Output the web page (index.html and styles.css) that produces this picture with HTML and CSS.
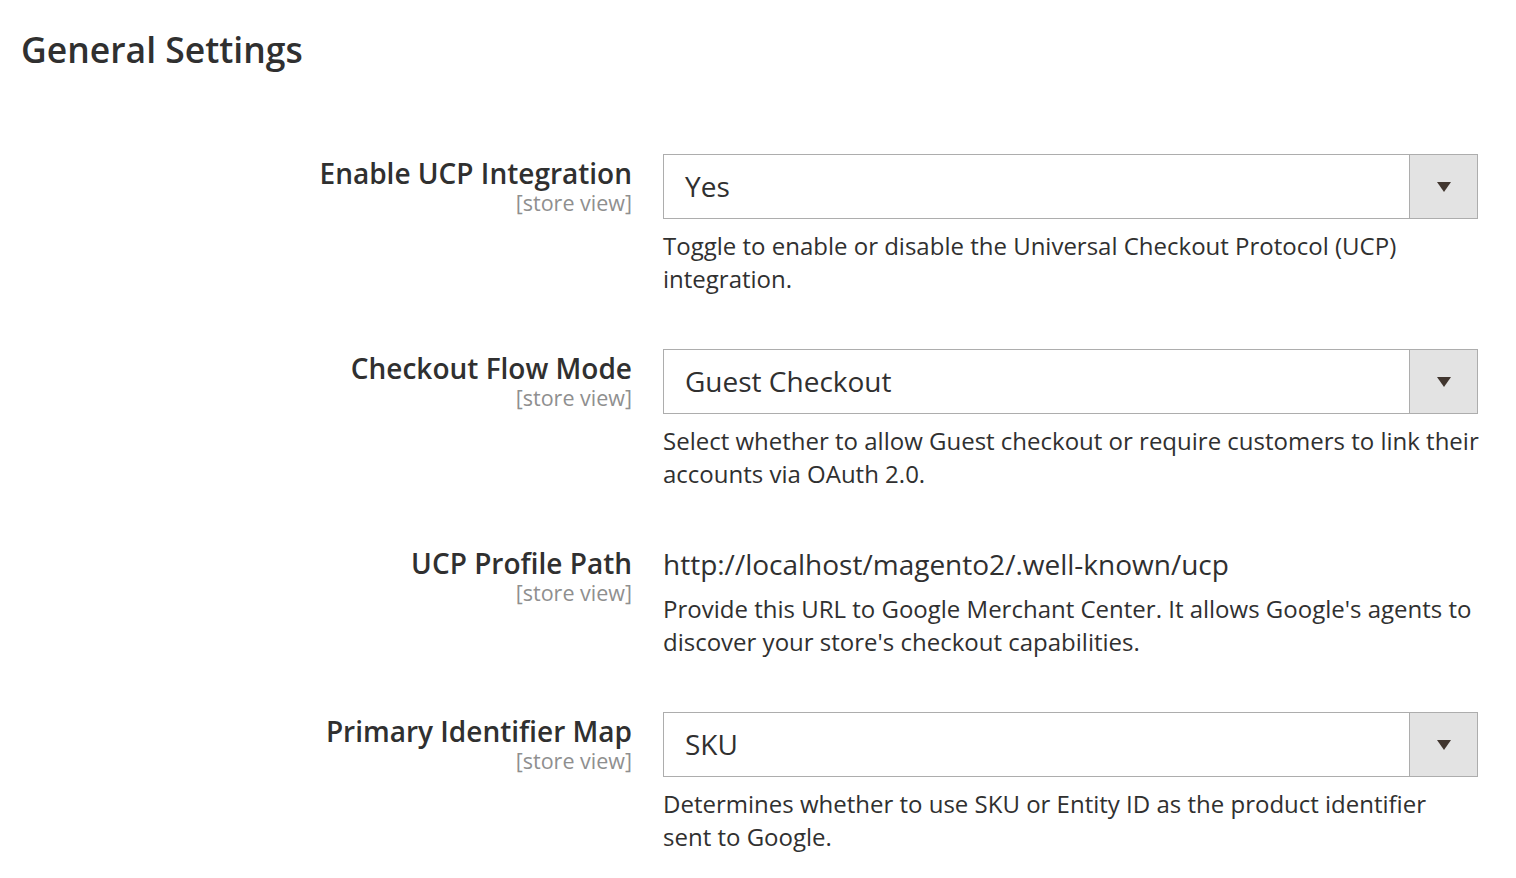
FILE: index.html
```html
<!DOCTYPE html>
<html lang="en">
<head>
<meta charset="utf-8">
<title>General Settings</title>
<link rel="stylesheet" href="styles.css">
</head>
<body>
<div class="page">
  <h1 class="section-title">General Settings</h1>
  <div class="config">
    <div class="row">
      <div class="label-col">
        <div class="label">Enable UCP Integration</div>
        <div class="scope">[store view]</div>
      </div>
      <div class="value-col">
        <div class="select"><span class="select-text">Yes</span><span class="select-btn"><span class="arrow"></span></span></div>
        <p class="note">Toggle to enable or disable the Universal Checkout Protocol (UCP) integration.</p>
      </div>
    </div>
    <div class="row">
      <div class="label-col">
        <div class="label">Checkout Flow Mode</div>
        <div class="scope">[store view]</div>
      </div>
      <div class="value-col">
        <div class="select"><span class="select-text">Guest Checkout</span><span class="select-btn"><span class="arrow"></span></span></div>
        <p class="note">Select whether to allow Guest checkout or require customers to link their accounts via OAuth 2.0.</p>
      </div>
    </div>
    <div class="row">
      <div class="label-col">
        <div class="label">UCP Profile Path</div>
        <div class="scope">[store view]</div>
      </div>
      <div class="value-col">
        <div class="value-text">http://localhost/magento2/.well-known/ucp</div>
        <p class="note">Provide this URL to Google Merchant Center. It allows Google's agents to discover your store's checkout capabilities.</p>
      </div>
    </div>
    <div class="row">
      <div class="label-col">
        <div class="label">Primary Identifier Map</div>
        <div class="scope">[store view]</div>
      </div>
      <div class="value-col">
        <div class="select"><span class="select-text">SKU</span><span class="select-btn"><span class="arrow"></span></span></div>
        <p class="note">Determines whether to use SKU or Entity ID as the product identifier sent to Google.</p>
      </div>
    </div>
  </div>
</div>
</body>
</html>
```

FILE: styles.css
```css
* { box-sizing: border-box; }
html, body { margin: 0; padding: 0; background: #fff; }
body {
  font-family: "Open Sans", "Noto Sans", sans-serif;
  color: #303030;
}
.page { padding: 29px 0 0 21px; }
.section-title {
  margin: 0;
  font-size: 35.5px;
  line-height: 40px;
  font-weight: 600;
  color: #303030;
}
.config { margin-top: 85px; }
.row {
  display: grid;
  grid-template-columns: 611px 815px;
  column-gap: 31px;
  margin-bottom: 54px;
}
.label-col { text-align: right; padding-top: 3px; }
.label {
  font-size: 28px;
  line-height: 32px;
  font-weight: 600;
  color: #303030;
}
.scope {
  margin-top: 2px;
  font-size: 21.5px;
  line-height: 24px;
  color: #8f8f8f;
}
.select {
  display: flex;
  height: 65px;
  border: 1px solid #adadad;
  background: #fff;
}
.select-text {
  flex: 1;
  padding-left: 21px;
  font-size: 28px;
  line-height: 63px;
  color: #303030;
}
.select-btn {
  width: 68px;
  background: #e3e3e3;
  border-left: 1px solid #adadad;
  display: flex;
  align-items: center;
  justify-content: center;
}
.arrow {
  width: 0;
  height: 0;
  border-left: 7.5px solid transparent;
  border-right: 7.5px solid transparent;
  border-top: 10px solid #41362f;
  margin-top: 1px;
}
.value-text {
  font-size: 28px;
  line-height: 40px;
  color: #303030;
}
.note {
  margin: 10px -1px 0 0;
  font-size: 24px;
  line-height: 33px;
  color: #303030;
}
.value-text + .note { margin-top: 8px; }
```
